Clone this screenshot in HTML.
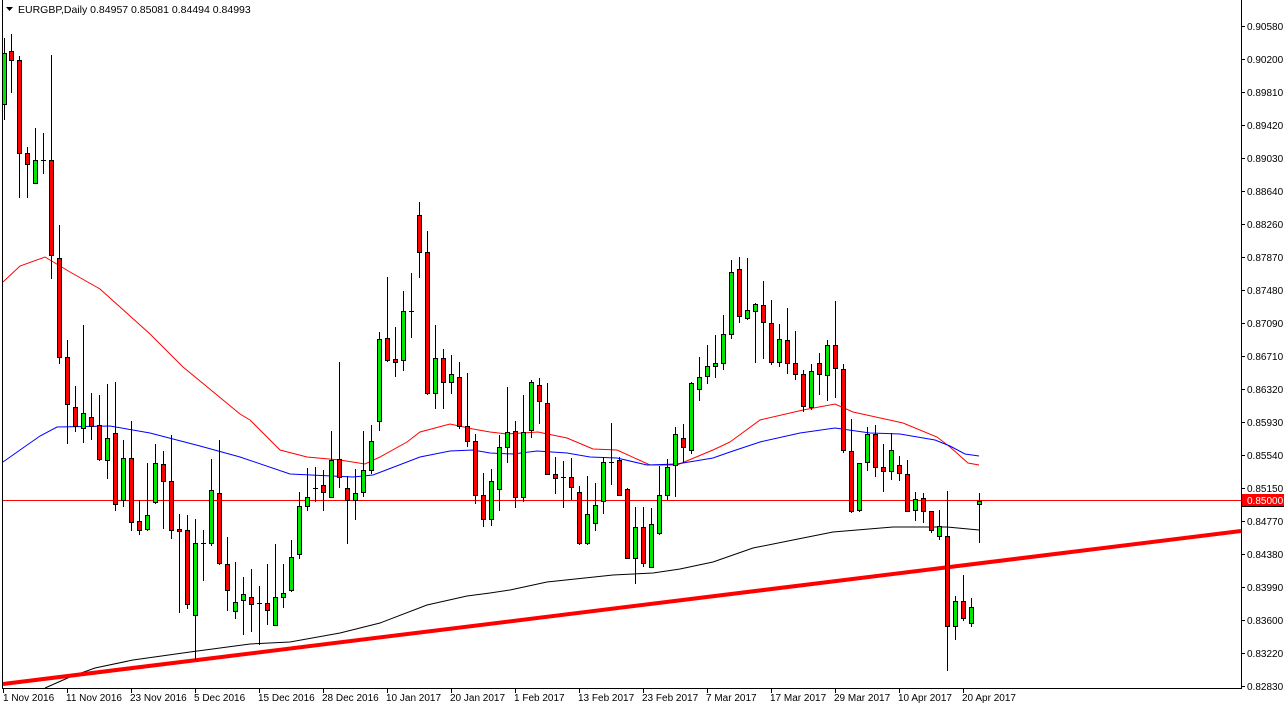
<!DOCTYPE html>
<html><head><meta charset="utf-8">
<style>
html,body{margin:0;padding:0;background:#fff;}
body{width:1284px;height:709px;overflow:hidden;position:relative;font-family:"Liberation Sans",sans-serif;}
svg{position:absolute;left:0;top:0;}
text{font-family:"Liberation Sans",sans-serif;font-size:10px;fill:#000;}
</style></head><body>
<svg id="s" width="1284" height="709" viewBox="0 0 1284 709" xmlns="http://www.w3.org/2000/svg">
<rect x="0" y="0" width="1284" height="709" fill="#fff"/>
<g id="grid"></g>
<!-- moving averages -->
<polyline fill="none" stroke="#ff0000" stroke-width="1" points="3,282 20,266 45,257 70,272 100,289 130,316 150,334 183,367 200,381 240,414 250,420 280,450 307,457 340,460 365,464 380,457 407,442 420,432 450,424 473,429 490,432 507,434 538,432 567,438 593,449 617,450 650,465 677,465 713,450 730,442 760,420 803,410 835,404 853,412 903,423 937,437 950,447 968,463 979,465"/>
<polyline fill="none" stroke="#0000ff" stroke-width="1" points="3,462 20,450 40,436 57,427 110,426 150,433 200,446 240,457 290,474 353,477 373,475 420,457 450,451 473,450 490,453 513,454 537,451 567,453 590,457 617,458 647,465 677,464 713,458 730,452 760,442 800,433 835,428 870,433 900,434 935,440 950,446 965,454 979,456"/>
<polyline fill="none" stroke="#000" stroke-width="1" points="45,688 70,677 95,668 133,660 190,652 250,644 290,642 340,633 380,623 427,605 467,596 490,593 510,590 547,582 613,575 653,573 680,569 713,562 753,548 793,540 833,532 893,527 947,527 979,530"/>
<!-- horizontal line -->
<line x1="2" y1="500.5" x2="1241" y2="500.5" stroke="#ff0000" stroke-width="1"/>
<!-- trendline -->
<line x1="3" y1="684" x2="1241" y2="531" stroke="#ff0000" stroke-width="4"/>
<g id="candles"></g>
<!-- frame -->
<line x1="2.5" y1="0" x2="2.5" y2="688" stroke="#000"/>
<line x1="2" y1="688.5" x2="1241.5" y2="688.5" stroke="#000"/>
<line x1="1241.5" y1="0" x2="1241.5" y2="689" stroke="#000"/>
<!-- title -->
<polygon points="6,7 13,7 9.5,11" fill="#000"/>
<text x="18" y="13" style="font-size:10.5px">EURGBP,Daily  0.84957 0.85081 0.84494 0.84993</text>
<!-- price axis -->
<g id="pax">
<text x="1247" y="30">0.90580</text>
<text x="1247" y="63">0.90200</text>
<text x="1247" y="96">0.89810</text>
<text x="1247" y="129">0.89420</text>
<text x="1247" y="162">0.89030</text>
<text x="1247" y="195">0.88640</text>
<text x="1247" y="228">0.88260</text>
<text x="1247" y="261">0.87870</text>
<text x="1247" y="294">0.87480</text>
<text x="1247" y="327">0.87090</text>
<text x="1247" y="360">0.86710</text>
<text x="1247" y="393">0.86320</text>
<text x="1247" y="426">0.85930</text>
<text x="1247" y="459">0.85540</text>
<text x="1247" y="492">0.85150</text>
<text x="1247" y="525">0.84770</text>
<text x="1247" y="558">0.84380</text>
<text x="1247" y="591">0.83990</text>
<text x="1247" y="624">0.83600</text>
<text x="1247" y="657">0.83220</text>
<text x="1247" y="690">0.82830</text>
</g>
<g stroke="#000">
<line x1="1241" y1="26.5" x2="1245" y2="26.5"/><line x1="1241" y1="59.5" x2="1245" y2="59.5"/><line x1="1241" y1="92.5" x2="1245" y2="92.5"/><line x1="1241" y1="125.5" x2="1245" y2="125.5"/><line x1="1241" y1="158.5" x2="1245" y2="158.5"/><line x1="1241" y1="191.5" x2="1245" y2="191.5"/><line x1="1241" y1="224.5" x2="1245" y2="224.5"/><line x1="1241" y1="257.5" x2="1245" y2="257.5"/><line x1="1241" y1="290.5" x2="1245" y2="290.5"/><line x1="1241" y1="323.5" x2="1245" y2="323.5"/><line x1="1241" y1="356.5" x2="1245" y2="356.5"/><line x1="1241" y1="389.5" x2="1245" y2="389.5"/><line x1="1241" y1="422.5" x2="1245" y2="422.5"/><line x1="1241" y1="455.5" x2="1245" y2="455.5"/><line x1="1241" y1="488.5" x2="1245" y2="488.5"/><line x1="1241" y1="521.5" x2="1245" y2="521.5"/><line x1="1241" y1="554.5" x2="1245" y2="554.5"/><line x1="1241" y1="587.5" x2="1245" y2="587.5"/><line x1="1241" y1="620.5" x2="1245" y2="620.5"/><line x1="1241" y1="653.5" x2="1245" y2="653.5"/><line x1="1241" y1="686.5" x2="1245" y2="686.5"/>
</g>
<rect x="1242" y="494" width="42" height="12" fill="#ff0000"/>
<rect x="1242" y="506" width="42" height="1" fill="#000"/>
<text x="1247" y="504" style="fill:#fff">0.85000</text>
<!-- date axis -->
<g stroke="#000">
<line x1="3.5" y1="688" x2="3.5" y2="693"/><line x1="67.5" y1="688" x2="67.5" y2="693"/><line x1="131.5" y1="688" x2="131.5" y2="693"/><line x1="195.5" y1="688" x2="195.5" y2="693"/><line x1="259.5" y1="688" x2="259.5" y2="693"/><line x1="323.5" y1="688" x2="323.5" y2="693"/><line x1="387.5" y1="688" x2="387.5" y2="693"/><line x1="451.5" y1="688" x2="451.5" y2="693"/><line x1="515.5" y1="688" x2="515.5" y2="693"/><line x1="579.5" y1="688" x2="579.5" y2="693"/><line x1="643.5" y1="688" x2="643.5" y2="693"/><line x1="707.5" y1="688" x2="707.5" y2="693"/><line x1="771.5" y1="688" x2="771.5" y2="693"/><line x1="835.5" y1="688" x2="835.5" y2="693"/><line x1="899.5" y1="688" x2="899.5" y2="693"/><line x1="963.5" y1="688" x2="963.5" y2="693"/>
</g>
<text x="3" y="701">1 Nov 2016</text>
<text x="66" y="701">11 Nov 2016</text>
<text x="130" y="701">23 Nov 2016</text>
<text x="194" y="701">5 Dec 2016</text>
<text x="258" y="701">15 Dec 2016</text>
<text x="322" y="701">28 Dec 2016</text>
<text x="386" y="701">10 Jan 2017</text>
<text x="450" y="701">20 Jan 2017</text>
<text x="514" y="701">1 Feb 2017</text>
<text x="578" y="701">13 Feb 2017</text>
<text x="642" y="701">23 Feb 2017</text>
<text x="706" y="701">7 Mar 2017</text>
<text x="770" y="701">17 Mar 2017</text>
<text x="834" y="701">29 Mar 2017</text>
<text x="898" y="701">10 Apr 2017</text>
<text x="962" y="701">20 Apr 2017</text>
</svg>
<script>
// [x, bodyTop, bodyBottom, high, low, green?]
var C=[
[4,53,104,38,120,1],[11,51,60,34,93,0],[19,60,153,56,198,0],[27,153,164,147,198,0],[35,160,183,128,184,1],[43,160,160,133,174,2],
[51,160,255,55,279,0],[59,258,357,225,364,0],[67,357,404,340,444,0],[75,407,426,386,432,0],[83,413,428,325,443,1],[91,417,426,393,440,0],
[99,425,459,395,461,0],[107,438,460,384,479,1],[115,433,504,382,511,0],[123,458,500,440,507,1],[131,458,522,421,531,0],[139,521,530,500,535,0],
[147,515,529,463,531,1],[155,463,502,444,504,1],[163,464,481,451,529,0],[171,481,530,435,539,0],[179,529,531,514,613,0],[187,530,604,515,609,0],
[195,543,615,519,660,1],[203,543,543,530,581,2],[211,490,543,459,546,1],[219,493,563,440,565,0],[227,564,590,537,611,0],[235,602,611,562,619,1],
[243,594,600,577,635,1],[251,597,604,569,632,0],[259,603,603,586,645,2],[267,603,610,564,625,0],[275,597,625,544,626,1],[283,593,597,564,608,1],
[291,557,590,540,592,1],[299,506,554,492,559,1],[307,497,506,468,511,1],[315,488,488,467,502,2],[323,485,492,470,511,0],[331,460,497,431,498,1],
[339,459,477,362,488,0],[347,488,500,476,544,0],[355,493,500,469,520,1],[363,470,492,431,497,1],[371,441,470,425,474,1],[379,339,421,332,431,1],
[387,338,360,277,362,0],[395,359,362,327,377,0],[403,311,360,291,371,1],[411,311,311,273,338,2],[419,215,252,202,278,0],[427,252,393,231,395,0],
[435,358,393,325,409,1],[443,358,382,349,409,0],[451,374,382,355,394,1],[459,377,426,362,429,0],[467,426,441,373,447,0],[475,441,495,434,504,0],
[483,495,519,473,527,0],[491,481,519,469,526,1],[499,447,489,435,511,1],[507,432,447,387,463,1],[515,431,497,421,508,0],[523,432,497,395,502,1],
[531,382,430,380,438,1],[539,385,401,378,424,0],[547,403,474,383,475,0],[555,474,478,457,494,0],[563,477,477,461,508,2],[571,477,487,458,500,0],
[579,492,543,486,545,0],[587,514,543,476,545,1],[595,505,523,483,531,1],[603,462,501,457,514,1],[611,462,462,423,485,2],[619,460,495,457,495,0],
[627,489,558,488,558,0],[635,527,558,507,584,1],[643,527,563,507,567,0],[651,524,567,508,568,1],[659,495,533,466,535,1],[667,467,495,459,500,1],
[675,434,465,427,497,1],[683,438,447,424,463,0],[691,383,450,382,454,1],[699,377,389,357,401,1],[707,366,376,345,384,1],[715,363,366,335,378,1],
[723,334,363,315,370,1],[731,272,334,260,339,1],[739,269,316,257,323,0],[747,310,318,258,320,1],[755,304,311,303,363,1],[763,305,322,281,359,0],
[771,323,362,300,365,0],[779,339,362,324,367,1],[787,340,363,308,374,0],[795,363,374,331,380,0],[803,374,406,370,412,0],[811,371,407,364,410,1],
[819,363,374,353,395,0],[827,345,375,340,401,1],[835,345,368,301,398,0],[843,369,450,364,453,0],[851,451,511,419,513,0],[859,463,510,463,512,1],
[867,434,462,427,471,1],[875,434,467,425,477,0],[883,467,471,444,492,0],[891,450,471,433,480,1],[899,465,473,456,481,0],[907,474,511,460,511,0],
[915,499,510,492,521,1],[923,498,511,493,523,0],[931,511,530,511,533,0],[939,526,536,510,540,1],[947,536,626,491,671,0],[955,601,626,596,640,1],
[963,601,618,575,621,0],[971,607,623,598,627,1],[979,501,504,493,543,1]
];
var NS="http://www.w3.org/2000/svg",g=document.getElementById("candles");
C.forEach(function(c){
 var x=c[0]+0.5;
 var w=document.createElementNS(NS,"line");
 w.setAttribute("x1",x);w.setAttribute("x2",x);w.setAttribute("y1",c[3]);w.setAttribute("y2",c[4]);
 w.setAttribute("stroke","#000");g.appendChild(w);
 if(c[5]==2||c[2]-c[1]<1){
  var d=document.createElementNS(NS,"line");
  d.setAttribute("x1",c[0]-2);d.setAttribute("x2",c[0]+3);d.setAttribute("y1",c[1]+0.5);d.setAttribute("y2",c[1]+0.5);
  d.setAttribute("stroke","#000");g.appendChild(d);
 } else {
  var r=document.createElementNS(NS,"rect");
  r.setAttribute("x",c[0]-2+0.5);r.setAttribute("y",c[1]+0.5);r.setAttribute("width",4);r.setAttribute("height",c[2]-c[1]);
  r.setAttribute("fill",c[5]?"#00e600":"#ff0000");r.setAttribute("stroke","#000");r.setAttribute("stroke-width","1");
  g.appendChild(r);
 }
});
</script>
</body></html>
